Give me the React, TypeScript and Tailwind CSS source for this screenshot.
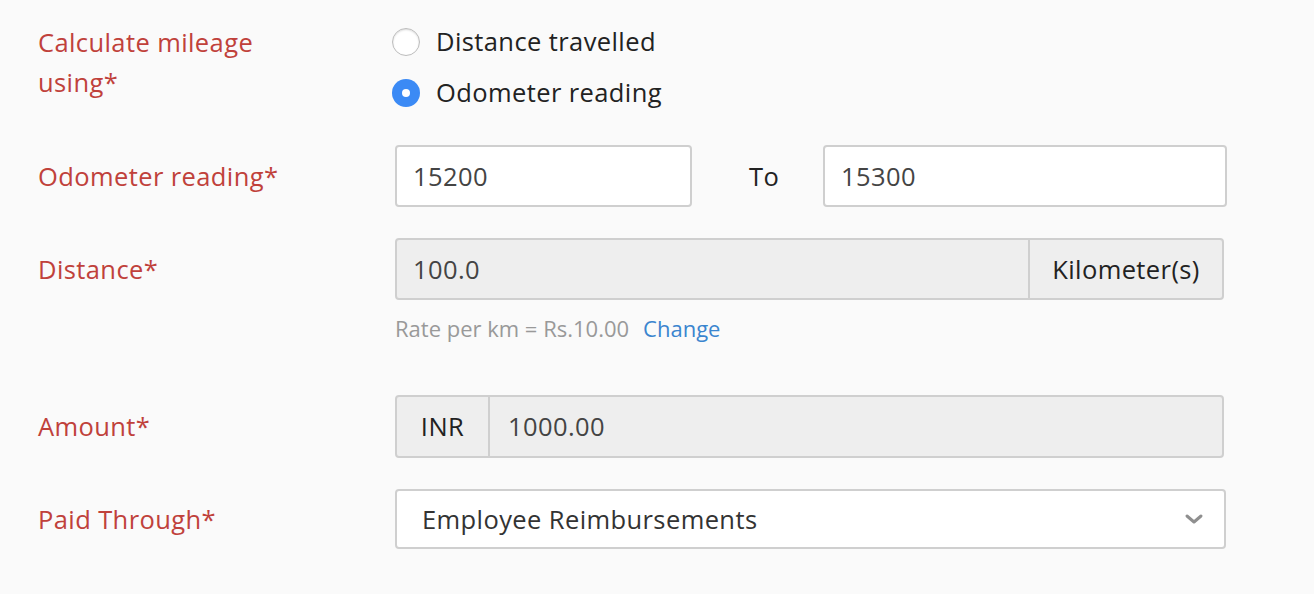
import React from "react";

const font = { fontFamily: "'Open Sans', Lato, sans-serif" };

function Label({ children, className = "" }: { children: React.ReactNode; className?: string }) {
  return <div className={`w-[357px] shrink-0 text-[25.5px] tracking-[0.4px] text-[#c0413b] ${className}`}>{children}</div>;
}

const txt = "text-[25.5px] tracking-[0.4px]";

export default function App() {
  return (
    <div className="min-h-[594px] w-[1314px] bg-[#fafafa] pl-[38px] pt-[16px] text-[#222]" style={font}>
      {/* Row 1 */}
      <div className="flex">
        <Label className="pt-[6px] leading-[40px]">
          Calculate mileage
          <br />
          using*
        </Label>
        <div className="flex flex-col">
          <div className="flex h-[51px] items-center">
            <span className="ml-[-3px] h-[28px] w-[28px] rounded-full border border-[#bdbdbd] bg-white shadow-[inset_0_1px_2px_rgba(0,0,0,0.15)]" />
            <span className={`ml-[16px] ${txt}`}>Distance travelled</span>
          </div>
          <div className="flex h-[51px] items-center">
            <span className="ml-[-3px] flex h-[28px] w-[28px] items-center justify-center rounded-full bg-[#3b8af5]">
              <span className="h-[8px] w-[8px] rounded-full bg-white" />
            </span>
            <span className={`ml-[16px] ${txt}`}>Odometer reading</span>
          </div>
        </div>
      </div>

      {/* Odometer */}
      <div className="mt-[27px] flex items-center">
        <Label>Odometer reading*</Label>
        <div className={`flex h-[62px] w-[297px] items-center rounded-[4px] border-2 border-[#cfcfcf] bg-white pl-[16px] text-[#444] ${txt}`}>
          15200
        </div>
        <div className={`w-[131px] pl-[57px] ${txt}`}>To</div>
        <div className={`flex h-[62px] w-[404px] items-center rounded-[4px] border-2 border-[#cfcfcf] bg-white pl-[16px] text-[#444] ${txt}`}>
          15300
        </div>
      </div>

      {/* Distance */}
      <div className="mt-[31px] flex items-center">
        <Label>Distance*</Label>
        <div className="flex h-[62px] w-[829px] rounded-[4px] border-2 border-[#cfcfcf] bg-[#eeeeee]">
          <div className={`flex flex-1 items-center pl-[16px] text-[#444] ${txt}`}>100.0</div>
          <div className={`flex w-[194px] items-center justify-center border-l-2 border-[#cfcfcf] text-[#222] ${txt}`}>
            Kilometer(s)
          </div>
        </div>
      </div>
      <div className="mt-[14px] flex">
        <div className="w-[357px] shrink-0" />
        <div className="text-[22px] leading-[28px] text-[#999]">
          Rate per km = Rs.10.00<span className="ml-[14px] text-[#3a85cf]">Change</span>
        </div>
      </div>

      {/* Amount */}
      <div className="mt-[53px] flex items-center">
        <Label>Amount*</Label>
        <div className="flex h-[63px] w-[829px] rounded-[4px] border-2 border-[#cfcfcf] bg-[#eeeeee]">
          <div className={`flex w-[93px] items-center justify-center border-r-2 border-[#cfcfcf] text-[#222] ${txt}`}>INR</div>
          <div className={`flex flex-1 items-center pl-[18px] text-[#444] ${txt}`}>1000.00</div>
        </div>
      </div>

      {/* Paid Through */}
      <div className="mt-[31px] flex items-center">
        <Label>Paid Through*</Label>
        <div className={`flex h-[60px] w-[831px] items-center justify-between rounded-[4px] border-2 border-[#cfcfcf] bg-white pl-[25px] pr-[20px] text-[#333] ${txt}`}>
          <span>Employee Reimbursements</span>
          <svg width="20" height="14" viewBox="0 0 20 14" fill="none">
            <path d="M3 4 L10 10 L17 4" stroke="#8f8f8f" strokeWidth="3" strokeLinecap="round" strokeLinejoin="round" />
          </svg>
        </div>
      </div>
    </div>
  );
}
